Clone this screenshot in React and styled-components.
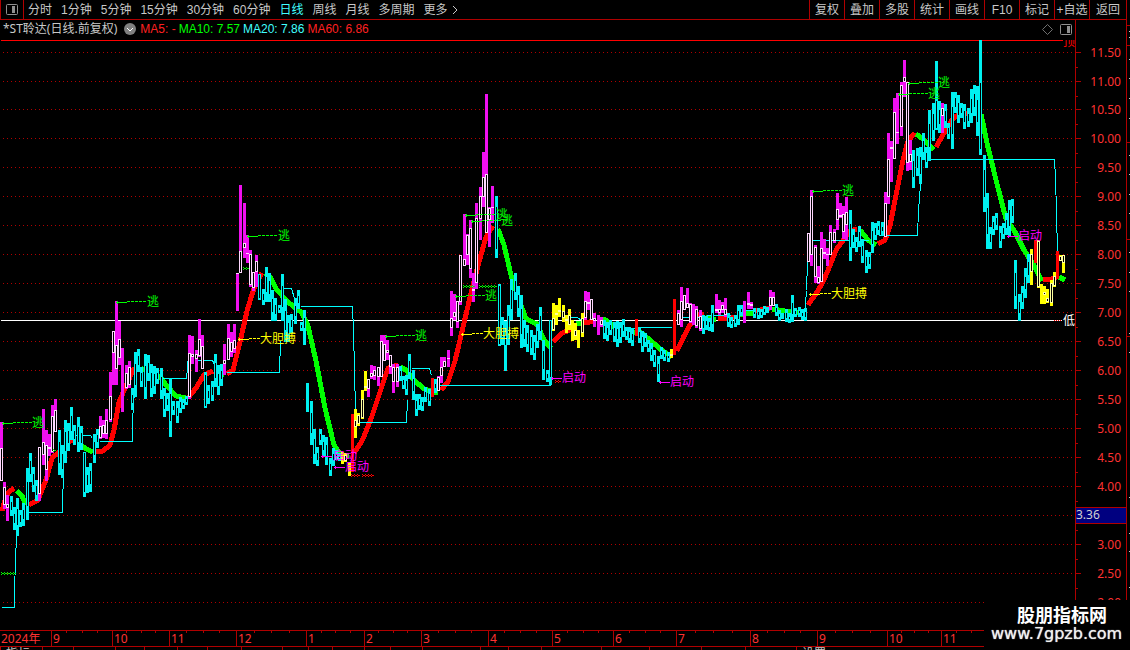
import React from 'react';
import styled, { createGlobalStyle, css } from 'styled-components';

const GlobalStyle = createGlobalStyle`
	body {
		margin: 0;
		background: #000;
		overflow: hidden;
	}

	* {
		box-sizing: border-box;
	}
`;

const sans = '"Noto Sans", "Noto Sans CJK SC", sans-serif';

const RED = '#b00000';
const CYAN = '#00f0f0';
const MAGENTA = '#f010f0';
const YELLOW = '#ffff00';
const GREEN = '#00ff00';

const Page = styled.div`
	position: relative;
	display: flex;
	height: 100vh;
	overflow: hidden;
	background: #000;
	color: #c8c8c8;
	font-family: ${sans};
	font-size: 12px;
	line-height: 18px;
`;

const Main = styled.main`
	flex: 1;
	min-width: 0;
	display: flex;
	flex-direction: column;
`;

const Toolbar = styled.nav`
	display: flex;
	justify-content: space-between;
	height: 20px;
	border-bottom: 1px solid ${RED};
	font-family: "Liberation Sans", "Noto Sans CJK SC", sans-serif;
	white-space: nowrap;
`;

const Group = styled.div`
	display: flex;
`;

const barButton = css`
	padding: 0;
	border: 0;
	background: none;
	color: inherit;
	font: inherit;
	line-height: 18px;
	white-space: nowrap;
	cursor: pointer;
`;

const PanelButton = styled.button`
	${barButton}
	display: flex;
	align-items: center;
	justify-content: center;
	width: 24px;
	border-right: 1px solid ${RED};
	border-left: 1px solid ${RED};
`;

const Periods = styled.div`
	display: flex;
	gap: 9px;
	padding-left: 4px;
`;

const PeriodButton = styled.button`
	${barButton}
	color: ${props => (props.$active ? '#40ffff' : '#c8c8c8')};
`;

const MoreButton = styled.button`
	${barButton}
	display: flex;
	align-items: center;
	gap: 4px;
`;

const ToolButton = styled.button`
	${barButton}
	width: 35px;
	border-left: 1px solid ${RED};
	text-align: center;

	&:last-child {
		width: 37px;
	}
`;

const Body = styled.div`
	display: flex;
`;

const Plot = styled.section`
	flex: 1;
	min-width: 0;
`;

const TitleRow = styled.header`
	display: flex;
	align-items: center;
	height: 20px;
	padding: 0 3px 2px;
	white-space: nowrap;
`;

const StockName = styled.h1`
	margin: 0 7px 0 0;
	font-size: 12px;
	font-weight: 400;
	line-height: 18px;
`;

const Averages = styled.div`
	display: flex;
	gap: 3px;
	flex: 1;
	padding-left: 4px;
	font-family: "Liberation Sans", sans-serif;
`;

const Average = styled.span`
	color: ${props => props.$color};
`;

const Tools = styled.div`
	display: flex;
	align-items: center;
	gap: 7px;
`;

const IconButton = styled.button`
	${barButton}
	display: flex;
`;

const Canvas = styled.svg`
	display: block;
	width: 100%;
	height: 590px;
	font-family: "Noto Sans CJK SC", sans-serif;
	font-size: 12px;
	shape-rendering: crispEdges;
`;

const PriceAxis = styled.svg`
	flex: none;
	width: 51px;
	height: 610px;
	font-family: ${sans};
	font-size: 12px;
	shape-rendering: crispEdges;
`;

const DateAxis = styled.div`
	display: flex;
	height: 17px;
	border-top: 1px solid ${RED};
	border-bottom: 1px solid ${RED};
	color: #ff3232;
	line-height: 15px;
`;

const Month = styled.div`
	position: relative;
	flex: none;
	display: flex;
	width: ${props => props.$width}px;
	padding-left: 1px;
	border-left: ${props => (props.$first ? 0 : `1px solid ${RED}`)};
`;

const MonthTicks = styled.div`
	position: absolute;
	top: 0;
	right: 0;
	left: 0;
	display: flex;
	justify-content: space-evenly;
`;

const Tick = styled.i`
	width: 1px;
	height: 2px;
	background: ${RED};
`;

const Footer = styled.footer`
	display: flex;
	height: 3px;
	overflow: hidden;
	line-height: 14px;
`;

const FooterCell = styled.div`
	flex: none;
	width: ${props => props.$width}px;
	height: 14px;
	padding-left: 5px;
	border-left: 1px solid ${RED};
	white-space: nowrap;
`;

const Edge = styled.svg`
	flex: none;
	width: 4px;
	height: 100%;
	shape-rendering: crispEdges;
`;

const Watermark = styled.div`
	position: absolute;
	right: 0;
	bottom: 0;
	width: 146px;
	height: 50px;
	padding: 4px 0 0 7px;
	background: #000;
	color: #fff;
	white-space: nowrap;
`;

const WatermarkName = styled.div`
	padding-left: 26px;
	font-family: "Noto Sans CJK SC", sans-serif;
	font-size: 18px;
	font-weight: 700;
	line-height: 20px;
`;

const WatermarkUrl = styled.div`
	color: #f0f0f0;
	font-family: "DejaVu Sans", sans-serif;
	font-size: 16px;
	line-height: 20px;
	text-shadow: 0 0 1px #f0f0f0;
`;

const periods = ['分时', '1分钟', '5分钟', '15分钟', '30分钟', '60分钟', '日线', '周线', '月线', '多周期'];
const tools = ['复权', '叠加', '多股', '统计', '画线', 'F10', '标记', '+自选', '返回'];

const averages = [
	['MA5: -', '#ff2020'],
	['MA10: 7.57', GREEN],
	['MA20: 7.86', '#40ffff'],
	['MA60: 6.86', '#ff2020'],
];

const months = [
	['2024年', 51],
	['9', 61],
	['10', 57],
	['11', 67],
	['12', 70],
	['1', 58],
	['2', 57],
	['3', 67],
	['4', 64],
	['5', 61],
	['6', 63],
	['7', 74],
	['8', 67],
	['9', 70],
	['10', 54],
	['11', 60],
];

const footerCells = [42, 31, 42, 29, 33, 30, 34, 41, 26, 24, 32, 26, 32, 58, 28, 33, 60, 48, 52, 44, 51, 60];
const footerLabels = { 0: '指标', 21: '设置' };

const prices = [];
for (let p = 11.5; p >= 2; p -= 0.5) prices.push(p);

const priceY = p => (p >= 11 ? 52 + (11.5 - p) * 58 : 109 + (10.5 - p) * 58);

// x, high, low, then the open and close of the hollow body
const candles = {
	m: [
		[0, 422, 481, 448, 481], [3, 482, 509, 487, 505], [6, 495, 521, 504, 508],
		[38, 447, 501, 447, 494], [42, 409, 465, 442, 455], [45, 430, 481, 445, 470],
		[48, 434, 456, 447, 449], [51, 405, 453, 416, 452], [54, 399, 432, 410, 432],
		[99, 416, 439, 426, 438], [102, 420, 438, 425, 434], [105, 409, 439, 420, 434],
		[109, 372, 422, 396, 420], [112, 331, 385, 331, 353], [115, 301, 385, 345, 369],
		[118, 321, 365, 339, 358], [121, 348, 412], [125, 365, 389, 373, 388],
		[128, 361, 388, 367, 385], [188, 335, 399, 353, 397], [191, 336, 364, 354, 357],
		[195, 350, 372, 354, 359], [198, 319, 357, 339, 356], [201, 335, 369, 346, 369],
		[223, 344, 375, 360, 364], [227, 324, 360, 338, 360], [230, 332, 357, 342, 352],
		[233, 324, 353, 340, 349], [236, 273, 311, 273, 274], [239, 185, 273, 251, 273],
		[243, 203, 258, 243, 248], [246, 235, 263, 253, 254], [249, 250, 287, 254, 285],
		[252, 272, 291, 272, 288], [255, 255, 287, 261, 272],
		[367, 379, 397, 379, 389], [370, 365, 379, 373, 377], [373, 366, 380, 370, 376],
		[377, 367, 386, 367, 377], [380, 335, 377, 341, 377], [383, 335, 361, 344, 361],
		[386, 340, 360, 350, 353], [389, 355, 374, 355, 367], [392, 364, 393, 367, 382],
		[396, 364, 387, 367, 382],
		[437, 376, 391, 377, 391], [440, 357, 383, 367, 376], [443, 357, 367, 361, 367],
		[447, 350, 367, 358, 359], [450, 291, 336, 318, 328], [453, 294, 320, 312, 317],
		[456, 301, 328, 301, 322], [459, 255, 305, 255, 302], [463, 214, 266, 259, 266],
		[466, 234, 265, 235, 255], [469, 220, 278, 228, 269], [472, 273, 302, 289, 291],
		[475, 203, 289, 218, 283], [479, 187, 240, 196, 219], [482, 152, 207, 177, 197],
		[485, 94, 233, 174, 233], [488, 207, 247, 208, 220], [491, 186, 223, 207, 208],
		[584, 291, 320, 301, 318], [587, 292, 310, 302, 304], [590, 299, 320, 299, 320],
		[593, 313, 327, 318, 321], [597, 315, 335], [600, 317, 327, 320, 325],
		[677, 310, 325, 313, 325], [680, 287, 327, 301, 320], [683, 295, 310, 295, 310],
		[686, 288, 308, 303, 308], [689, 303, 323, 304, 322], [692, 304, 325],
		[695, 306, 328, 309, 326], [699, 310, 331, 316, 329],
		[715, 294, 313, 309, 311], [718, 300, 315, 309, 313], [721, 302, 313, 305, 310],
		[724, 298, 317, 309, 315], [743, 301, 323], [747, 292, 309, 303, 305],
		[750, 302, 309, 304, 306], [769, 290, 310, 297, 306], [772, 292, 306, 297, 306],
		[807, 233, 262, 233, 262], [810, 190, 266, 196, 255], [814, 245, 283, 247, 277],
		[817, 266, 284, 277, 283], [820, 232, 282, 248, 282], [823, 239, 259, 252, 254],
		[826, 248, 266, 254, 255], [829, 225, 255, 232, 255], [833, 229, 243, 232, 241],
		[836, 193, 230, 209, 220], [839, 203, 218, 215, 217], [842, 206, 239, 214, 232],
		[845, 197, 240, 212, 225],
		[884, 192, 237, 203, 237], [887, 133, 204, 159, 197], [890, 141, 182, 147, 149],
		[893, 98, 159, 112, 159], [896, 93, 144, 132, 133], [900, 82, 136, 85, 127],
		[903, 60, 97, 77, 82], [906, 82, 171, 82, 163], [909, 140, 170, 154, 162],
		[941, 103, 133, 108, 116],
	],
	c: [
		[10, 496, 516], [13, 507, 530], [16, 498, 536], [19, 510, 527], [22, 503, 526],
		[26, 468, 520], [29, 453, 482], [32, 467, 492], [35, 480, 501], [58, 430, 475],
		[61, 445, 478], [64, 420, 463], [67, 423, 451], [70, 407, 440], [73, 425, 445],
		[77, 417, 452], [80, 426, 450], [83, 452, 497, 452, 493], [86, 467, 493], [89, 463, 492],
		[93, 434, 463], [96, 429, 448], [131, 388, 410], [134, 352, 397], [137, 349, 372],
		[140, 367, 387], [144, 354, 399], [147, 355, 381], [150, 364, 397], [153, 366, 394],
		[156, 368, 384], [160, 368, 399], [163, 388, 417], [166, 393, 411], [169, 378, 437],
		[172, 401, 415], [176, 401, 423], [179, 397, 413], [182, 399, 409], [185, 396, 405],
		[204, 372, 408, 374, 407], [207, 385, 404], [211, 381, 401], [214, 354, 387],
		[217, 365, 395], [220, 364, 386], [258, 274, 300, 274, 299], [262, 289, 305],
		[265, 267, 302], [268, 273, 302], [271, 290, 321], [274, 298, 321], [278, 305, 313],
		[281, 274, 321, 285, 308], [284, 299, 342], [287, 315, 342], [290, 314, 333], [294, 298, 324],
		[297, 290, 309], [300, 322, 331], [303, 310, 345, 317, 329], [306, 383, 412, 411, 412], [310, 401, 445],
		[313, 429, 464], [316, 447, 466], [319, 429, 445], [322, 435, 457], [325, 437, 465],
		[329, 458, 476], [332, 448, 466], [335, 450, 460], [338, 453, 461], [399, 366, 381],
		[402, 376, 389], [405, 375, 395], [408, 354, 379], [412, 370, 400], [415, 394, 416],
		[418, 394, 410], [421, 397, 411], [424, 387, 402], [428, 389, 406], [434, 379, 393],
		[495, 196, 258, 206, 250], [498, 284, 346, 285, 345], [501, 317, 345], [504, 321, 371, 331, 346],
		[507, 305, 345], [510, 279, 320], [514, 273, 300], [517, 286, 317], [520, 295, 348],
		[523, 320, 347], [526, 325, 352], [530, 330, 355], [533, 335, 360], [536, 324, 348],
		[539, 307, 340], [542, 340, 380], [546, 370, 382], [549, 320, 385, 320, 378],
		[603, 320, 339], [606, 322, 341], [609, 320, 335], [613, 322, 342], [616, 321, 347],
		[619, 322, 343], [622, 319, 337], [625, 327, 340], [628, 327, 343], [631, 328, 346],
		[638, 327, 343], [641, 331, 352], [644, 333, 347], [647, 340, 352], [650, 343, 361],
		[653, 350, 367], [657, 356, 382], [660, 347, 359], [663, 350, 361], [667, 352, 362],
		[702, 315, 334], [705, 316, 330], [708, 318, 331], [711, 305, 332], [727, 313, 327],
		[730, 317, 328], [734, 315, 327], [737, 305, 325], [740, 305, 316], [753, 308, 318],
		[757, 308, 319], [760, 309, 318], [763, 306, 315], [766, 307, 313], [775, 304, 316],
		[778, 310, 321], [781, 313, 319], [785, 309, 322], [788, 313, 323], [791, 295, 322],
		[794, 308, 317], [798, 307, 317], [801, 309, 320], [804, 308, 321],
		[849, 210, 261], [852, 229, 248], [855, 237, 252], [858, 226, 247], [861, 239, 263],
		[865, 250, 273], [868, 252, 269], [871, 222, 253], [874, 223, 240], [877, 221, 235],
		[881, 222, 236], [912, 150, 188], [916, 148, 176], [919, 147, 184], [922, 133, 160],
		[925, 147, 168], [928, 110, 161], [932, 103, 141], [935, 61, 130, 100, 129],
		[938, 101, 133], [944, 104, 128], [947, 123, 139], [951, 92, 149], [954, 92, 113],
		[957, 95, 123], [960, 103, 118], [963, 104, 129], [967, 108, 127], [970, 89, 123],
		[973, 85, 116], [976, 86, 136], [979, 40, 155, 82, 150], [983, 155, 212], [986, 193, 249],
		[989, 227, 249], [992, 216, 235], [995, 213, 230], [999, 226, 248], [1002, 223, 239],
		[1005, 213, 235], [1008, 200, 236], [1011, 199, 223], [1014, 260, 309],
		[1018, 294, 321], [1021, 286, 309], [1024, 268, 298], [1027, 254, 283],
	],
	y: [
		[341, 452, 464], [344, 453, 462, 455, 461], [348, 462, 476], [354, 409, 438, 420, 427],
		[357, 413, 426, 415, 424], [361, 390, 419, 399, 418], [364, 371, 391, 386, 388],
		[552, 303, 331, 318, 330], [555, 305, 325, 313, 315], [558, 298, 317, 310, 312],
		[562, 305, 322, 311, 318], [565, 315, 333, 319, 321], [568, 309, 330, 315, 325],
		[571, 320, 341], [574, 323, 340, 330, 336], [577, 330, 348], [581, 313, 337, 318, 333],
		[670, 349, 358, 354, 356], [1030, 249, 285, 254, 272], [1037, 240, 288, 241, 287],
		[1040, 284, 304], [1043, 286, 304, 292, 295], [1046, 289, 303, 298, 302],
		[1050, 280, 306, 283, 303], [1053, 272, 287, 276, 286], [1059, 255, 261, 256, 261],
		[1062, 255, 273, 255, 263],
	],
};

const candleColors = {
	m: [MAGENTA, '#ffd8ff'],
	c: [CYAN, CYAN],
	y: [YELLOW, '#ffffa0'],
};

const redBars = [[351, 414, 472], [431, 378, 397], [635, 319, 336], [673, 299, 355], [1034, 240, 263], [1056, 251, 279]];

const trend = [
	['red', '2,511 4,503 8,493 14,488'],
	[GREEN, '17,491 22,496 26,505'],
	['red', '29,505 38,500 46,480 52,458 58,453 64,448 70,441 76,440'],
	[GREEN, '80,444 86,449 93,452'],
	['red', '95,452 103,451 110,445 114,430 119,402 126,386 133,370 139,366'],
	[GREEN, '141,368 152,374 160,377 167,386 176,396 186,398'],
	['red', '188,398 196,388 204,375 213,371'],
	[GREEN, '215,374 224,375'],
	['red', '227,374 233,370 240,342 247,311 254,288 262,273'],
	[GREEN, '265,273 270,277 277,290 288,302 302,313 308,326 316,361 325,408 334,445 341,455 349,456'],
	['red', '354,453 362,441 371,419 379,395 388,368 398,365'],
	[GREEN, '400,367 406,370 414,380 424,389 438,393'],
	['red', '441,390 448,382 455,361 464,323 472,289 479,262 486,237 493,226'],
	[GREEN, '498,229 504,245 511,275 519,300 526,319 537,324 544,340 551,348'],
	['red', '553,342 562,333 570,330 576,325'],
	[GREEN, '576,324 582,323'],
	['red', '583,323 596,321'],
	[GREEN, '597,319 606,320 614,327 626,333 640,332 650,340 660,349 672,357'],
	['red', '677,351 684,336 690,325 697,315 704,314'],
	[GREEN, '706,317 716,320'],
	['red', '718,319 736,317'],
	[GREEN, '737,315 754,313'],
	['red', '755,311 770,308'],
	[GREEN, '772,309 785,311 804,313'],
	['red', '808,305 815,295 822,284 829,268 836,250 844,239 850,231 857,229'],
	[GREEN, '860,230 868,240 876,245'],
	['red', '878,244 885,240 890,226 896,195 903,160 908,141 915,133'],
	[GREEN, '916,134 923,139 934,150'],
	['red', '936,147 944,133 952,120 960,113 977,113'],
	[GREEN, '981,114 987,143 996,180 1006,219 1015,232 1024,250 1033,264 1042,281'],
	['red', '1043,280 1051,279 1057,277'],
	[GREEN, '1059,277 1065,280'],
];

const steps = [
	'1,607 14,607 14,591 15,560 16,536',
	'28,512 62,512 62,500 63,478',
	'74,435 90,435 92,438',
	'99,441 132,441 132,420 134,390',
	'160,378 186,378 188,355',
	'194,360 212,360 214,364',
	'226,372 279,372 280,340',
	'283,288 291,288 294,298',
	'300,306 352,306 353,330 355,410',
	'359,422 406,422 407,400',
	'411,368 429,368 431,375',
	'439,385 550,385 550,378',
	'566,317 577,317 581,320',
	'616,328 634,328',
	'640,327 671,327',
	'678,317 703,317',
	'706,315 730,315',
	'738,310 755,310',
	'804,318 806,290 807,262',
	'812,240 868,240',
	'878,235 917,235 918,210 920,184',
	'920,159 1054,159 1055,177 1056,212 1057,252',
];

// arrow tip x, y, label x, colour, text
const signals = [
	[2, 423, 32, GREEN, '逃'],
	[116, 302, 147, GREEN, '逃'],
	[247, 236, 278, GREEN, '逃'],
	[385, 336, 415, GREEN, '逃'],
	[455, 296, 485, GREEN, '逃'],
	[465, 215, 496, GREEN, '逃'],
	[471, 221, 501, GREEN, '逃'],
	[812, 191, 842, GREEN, '逃'],
	[898, 94, 928, GREEN, '逃'],
	[908, 83, 938, GREEN, '逃'],
	[238, 339, 260, YELLOW, '大胆搏'],
	[461, 334, 483, YELLOW, '大胆搏'],
	[809, 294, 831, YELLOW, '大胆搏'],
	[321, 456, 333, '#ff00ff', '启动'],
	[334, 467, 345, '#ff00ff', '启动'],
	[551, 378, 562, '#ff00ff', '启动'],
	[659, 382, 670, '#ff00ff', '启动'],
	[1007, 236, 1018, '#ff00ff', '启动'],
];

// runs of little crosses: x, y, count, colour
const crosses = [
	[1, 573, 5, GREEN],
	[53, 450, 1, GREEN],
	[243, 268, 2, GREEN],
	[463, 286, 4, GREEN],
	[479, 286, 6, GREEN],
	[351, 475, 3, 'red'],
	[362, 475, 4, 'red'],
	[555, 381, 2, 'red'],
];

function Candle({ data, colors }) {
	const [x, high, low] = data;
	const inset = Math.round((low - high) / 4);
	const open = data[3] || high + inset;
	const close = data[4] || low - inset;
	const isSolid = data.length === 3 && colors[0] !== CYAN;
	return (
		<g>
			<rect x={x} y={high} width='3' height={low - high} fill={colors[0]} />
			{!isSolid && <rect x={x} y={open} width='3' height={Math.max(close - open, 1)} fill={colors[1]} />}
			{!isSolid && close - open > 2 && (
				<rect x={x + 1} y={open + 1} width='1' height={close - open - 2} fill='#000' />
			)}
		</g>
	);
}

function Signal({ data }) {
	const [x, y, labelX, color, text] = data;
	return (
		<g stroke={color} fill='none'>
			<path d={`M${x} ${y + 0.5}h11M${x + 1.5} ${y - 1}v3`} />
			{labelX - x > 16 && <path d={`M${x + 11} ${y - 0.5}H${labelX}`} strokeDasharray='3 1' />}
			<text x={labelX} y={y + 4} fill={color} stroke='none'>
				{text}
			</text>
		</g>
	);
}

function Chart() {
	return (
		<Canvas role='img' aria-label='*ST聆达 日线'>
			<g transform='translate(0 -40)'>
				{prices.map(p => (
					<path key={p} d={`M3 ${priceY(p) + 0.5}H1075`} stroke='#b00000' strokeDasharray='1 3' />
				))}
				<rect x='1' y='40' width='1062' height='1' fill='red' />
				<rect x='1' y='320' width='1061' height='1' fill='#fff' />
				{trend.map(([color, points]) => (
					<polyline key={points} points={points} fill='none' stroke={color} strokeWidth='5' />
				))}
				<g transform='translate(0.5 0.5)' fill='none' stroke='#00ffff'>
					{steps.map(points => (
						<polyline key={points} points={points} />
					))}
				</g>
				{Object.keys(candles).map(kind =>
					candles[kind].map(c => <Candle key={kind + c[0]} data={c} colors={candleColors[kind]} />)
				)}
				{redBars.map(([x, top, bottom]) => (
					<rect key={x} x={x} y={top} width='3' height={bottom - top} fill='red' />
				))}
				{signals.map(s => (
					<Signal key={`${s[0]}-${s[1]}`} data={s} />
				))}
				{crosses.map(([x, y, count, color]) =>
					Array.from({ length: count }, (_, i) => (
						<path
							key={`${x}-${y}-${i}`}
							d={`M${x + i * 3} ${y - 0.5}h1m-1 2h1m0 -1h2`}
							stroke={color}
							fill='none'
						/>
					))
				)}
				<path d='M1054 320.5h8' stroke='red' strokeDasharray='1 1' />
				<text x='1063' y='46' fill='red'>
					顶
				</text>
				<text x='1063' y='325' fill='#fff'>
					低
				</text>
			</g>
		</Canvas>
	);
}

function Prices() {
	return (
		<PriceAxis>
			<g transform='translate(0 -20)'>
				<rect x='0' y='20' width='1' height='610' fill={RED} />
				{prices.map(p => (
					<g key={p}>
						<rect x='0' y={priceY(p)} width='6' height='1' fill={RED} />
						<rect x='0' y={priceY(p) + 15} width='3' height='1' fill={RED} />
						{p !== 3.5 && (
							<text x='46' y={priceY(p) + 5} textAnchor='end' fill='#ff3232'>
								{p.toFixed(2)}
							</text>
						)}
					</g>
				))}
				<rect x='0' y='507' width='51' height='17' fill={RED} />
				<rect x='1' y='508' width='50' height='15' fill='#000080' />
				<text x='1' y='519' fill='#d0d0d0'>
					3.36
				</text>
			</g>
		</PriceAxis>
	);
}

const PanelIcon = ({ color, right }) => (
	<svg width='12' height='11' viewBox='0 0 12 11' aria-hidden='true'>
		<rect x='0.5' y='0.5' width='11' height='10' rx='1' fill='none' stroke={color} />
		<rect x={right ? 7 : 6} y='2' width='3' height='7' fill={color} />
	</svg>
);

export default function App() {
	return (
		<Page>
			<GlobalStyle />
			<Main>
				<Toolbar>
					<Group>
						<PanelButton aria-label='panel'>
							<PanelIcon color='#909090' />
						</PanelButton>
						<Periods>
							{periods.map(p => (
								<PeriodButton key={p} $active={p === '日线'}>
									{p}
								</PeriodButton>
							))}
							<MoreButton>
								更多
								<svg width='6' height='10' viewBox='0 0 6 10' aria-hidden='true'>
									<path d='M1 1l4 4-4 4' fill='none' stroke='#c8c8c8' />
								</svg>
							</MoreButton>
						</Periods>
					</Group>
					<Group>
						{tools.map(t => (
							<ToolButton key={t}>{t}</ToolButton>
						))}
					</Group>
				</Toolbar>
				<Body>
					<Plot>
						<TitleRow>
							<StockName>*ST聆达(日线.前复权)</StockName>
							<IconButton aria-label='indicators'>
								<svg width='12' height='12' viewBox='0 0 12 12' aria-hidden='true'>
									<circle cx='6' cy='6' r='6' fill='#808080' />
									<path d='M3 5l3 3 3-3' fill='none' stroke='#fff' />
								</svg>
							</IconButton>
							<Averages>
								{averages.map(([text, color]) => (
									<Average key={text} $color={color}>
										{text}
									</Average>
								))}
							</Averages>
							<Tools>
								<IconButton aria-label='marker'>
									<svg width='11' height='11' viewBox='0 0 11 11' aria-hidden='true'>
										<path d='M5.5 .5l5 5-5 5-5-5z' fill='none' stroke='#707070' />
									</svg>
								</IconButton>
								<IconButton aria-label='layout'>
									<PanelIcon color='#909090' right />
								</IconButton>
							</Tools>
						</TitleRow>
						<Chart />
					</Plot>
					<Prices />
				</Body>
				<DateAxis>
					{months.map(([label, width], i) => (
						<Month key={i} $width={width} $first={i === 0}>
							{label}
							{i > 0 && (
								<MonthTicks>
									<Tick />
									<Tick />
									<Tick />
								</MonthTicks>
							)}
						</Month>
					))}
				</DateAxis>
				<Footer>
					{footerCells.map((width, i) => (
						<FooterCell key={i} $width={width}>
							{footerLabels[i]}
						</FooterCell>
					))}
				</Footer>
			</Main>
			<Edge>
				<rect x='0' y='0' width='1' height='650' fill={RED} />
				{[25, 45, 142, 239, 336].map(y => (
					<rect key={y} x='1' y={y} width='3' height='1' fill={RED} />
				))}
				{[31, 37, 59, 78, 98, 118, 155, 174, 194, 213, 252, 272, 291, 333, 352, 497, 533, 551, 587].map(y => (
					<rect key={y} x='3' y={y} width='1' height='1' fill='#c8c8c8' />
				))}
			</Edge>
			<Watermark>
				<WatermarkName>股朋指标网</WatermarkName>
				<WatermarkUrl>www.7gpzb.com</WatermarkUrl>
			</Watermark>
		</Page>
	);
}
